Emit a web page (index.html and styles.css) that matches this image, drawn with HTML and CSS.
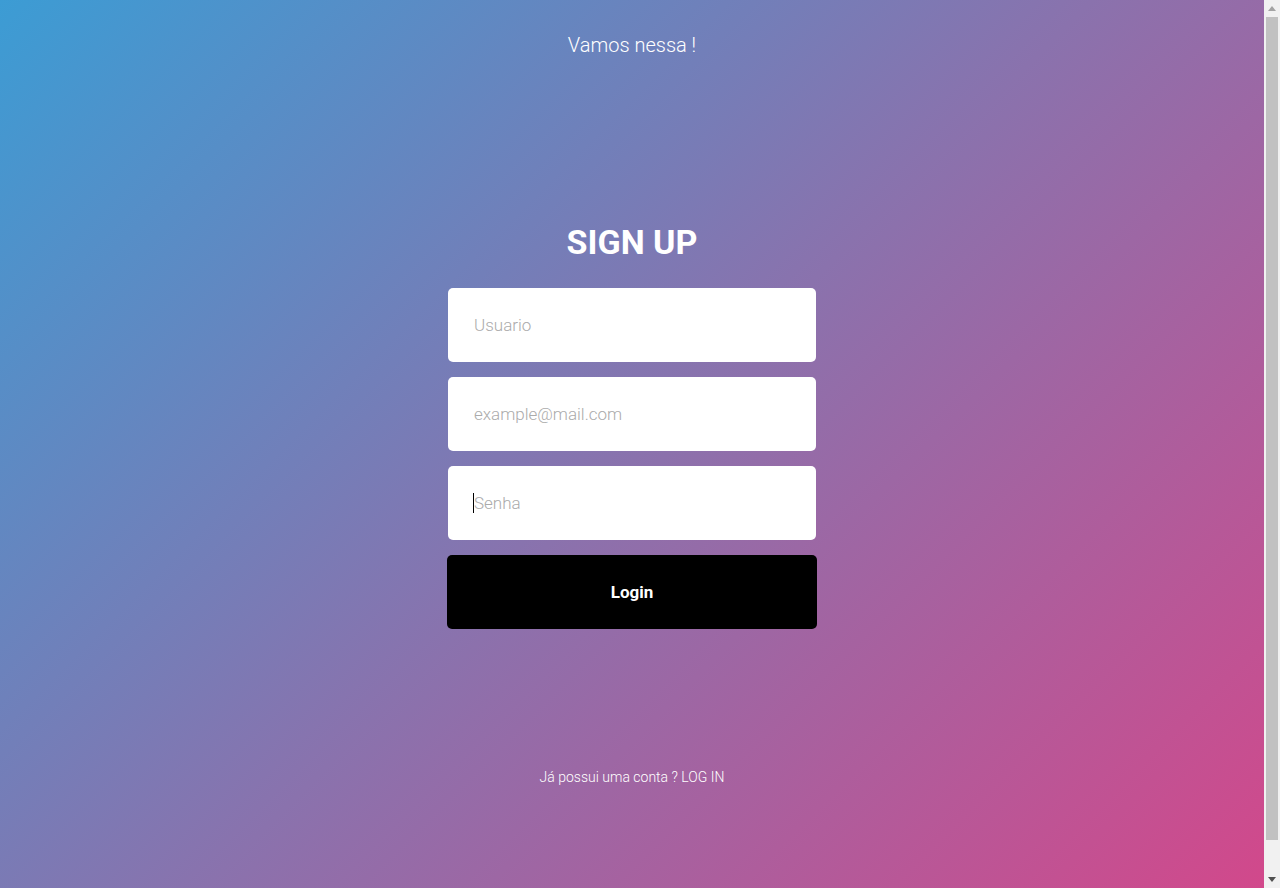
FILE: index.html
```html
<!DOCTYPE html>
<html lang="pt">
<head>
<meta charset="utf-8">
<title>Sign Up</title>
<link rel="stylesheet" href="styles.css">
</head>
<body>
<div class="page">
  <header class="top">Vamos nessa !</header>
  <main class="signup">
    <h1 class="title">SIGN UP</h1>
    <form class="form">
      <input class="field" type="text" placeholder="Usuario">
      <input class="field" type="email" placeholder="example@mail.com">
      <div class="field-wrap">
        <input class="field" type="password" placeholder="Senha" autofocus>
        <span class="caret"></span>
      </div>
      <button class="btn" type="button">Login</button>
    </form>
  </main>
  <footer class="foot">Já possui uma conta ? <a class="link" href="#">LOG IN</a></footer>
</div>
<div class="scrollbar" aria-hidden="true">
  <div class="sb-btn sb-up"><svg width="8" height="5" viewBox="0 0 8 5"><path d="M0 5 L4 0 L8 5 Z" fill="#a3a3a3"/></svg></div>
  <div class="sb-track"><div class="sb-thumb"></div></div>
  <div class="sb-btn sb-down"><svg width="8" height="5" viewBox="0 0 8 5"><path d="M0 0 L8 0 L4 5 Z" fill="#505050"/></svg></div>
</div>
</body>
</html>
```

FILE: styles.css
```css
html, body {
  margin: 0;
  padding: 0;
}
body {
  font-family: Roboto, "Liberation Sans", sans-serif;
  color: #fff;
  margin-right: 16px;
}
.page {
  min-height: 921px;
  box-sizing: border-box;
  padding: 33px 0 135px;
  display: flex;
  flex-direction: column;
  align-items: center;
  background: linear-gradient(135deg, #3c9cd4 0%, #8a72ad 50%, #d4478a 100%);
}
.top {
  font-size: 20px;
  font-weight: 300;
  line-height: 24px;
  height: 24px;
}
.signup {
  margin-top: 163px;
  display: flex;
  flex-direction: column;
  align-items: center;
}
.title {
  margin: 0;
  font-size: 34px;
  font-weight: 700;
  line-height: 44px;
  height: 44px;
}
.form {
  margin-top: 24px;
  width: 370px;
  display: flex;
  flex-direction: column;
  gap: 15px;
}
.field-wrap {
  position: relative;
  display: flex;
  flex-direction: column;
}
.field {
  margin: 0 1px;
  height: 74px;
  box-sizing: border-box;
  border: none;
  border-radius: 5px;
  background: #fff;
  padding: 0 26px;
  font-family: Roboto, "Liberation Sans", sans-serif;
  font-size: 17px;
  font-weight: 300;
  color: #333;
  outline: none;
}
.field::placeholder {
  color: #ababab;
  font-weight: 300;
}
.caret {
  position: absolute;
  left: 26px;
  top: 27px;
  width: 1px;
  height: 20px;
  background: #000;
}
.btn {
  height: 74px;
  border: none;
  border-radius: 5px;
  background: #000;
  color: #fff;
  font-family: Roboto, "Liberation Sans", sans-serif;
  font-size: 17px;
  font-weight: 700;
  cursor: pointer;
}
.foot {
  margin-top: 139px;
  font-size: 14px;
  font-weight: 300;
  line-height: 18px;
}
.link {
  color: #fff;
  text-decoration: none;
}
.scrollbar {
  position: fixed;
  top: 0;
  right: 0;
  width: 16px;
  height: 100vh;
  background: #f1f1f1;
  display: flex;
  flex-direction: column;
}
.sb-btn {
  height: 17px;
  display: flex;
  align-items: center;
  justify-content: center;
  flex: none;
}
.sb-track {
  flex: 1;
  padding: 0 2px;
  display: flex;
  flex-direction: column;
}
.sb-thumb {
  height: 823px;
  background: #c1c1c1;
}
```
